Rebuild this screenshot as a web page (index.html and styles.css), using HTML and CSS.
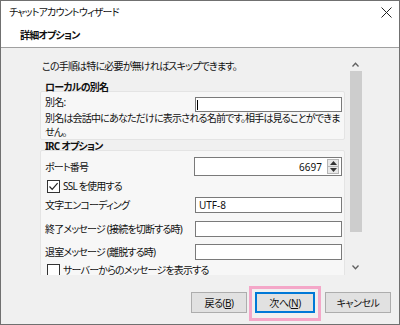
FILE: index.html
```html
<!DOCTYPE html>
<html lang="ja">
<head>
<meta charset="utf-8">
<title>チャットアカウントウィザード</title>
<link rel="stylesheet" href="styles.css">
</head>
<body>
<div class="window">
  <div class="titlebar">
    <span class="title">チャットアカウントウィザード</span>
    <svg class="close" width="11" height="11" viewBox="0 0 11 11"><path d="M0.5 0.5L10.5 10.5M10.5 0.5L0.5 10.5" stroke="#222" stroke-width="1" fill="none"/></svg>
  </div>
  <div class="header"><span class="header-title">詳細オプション</span></div>
  <div class="body">
    <div class="scroller">
      <div class="content">
        <p class="intro">この手順は特に必要が無ければスキップできます。</p>
        <div class="group-title">ローカルの別名</div>
        <div class="panel">
          <div class="row row-alias">
            <span class="label">別名:</span>
            <div class="field field-alias"><span class="caret"></span></div>
          </div>
          <p class="desc">別名は会話中にあなただけに表示される名前です。相手は見ることができま<br>せん。</p>
        </div>
        <div class="group-title group-title-irc">IRC オプション</div>
        <div class="panel panel-irc">
          <div class="row row-port">
            <span class="label">ポート番号</span>
            <div class="field field-spin">
              <span class="spin-value">6697</span>
              <span class="spin">
                <span class="spin-btn"><svg width="7" height="4" viewBox="0 0 7 4"><path d="M0 4L3.5 0L7 4Z" fill="#333"/></svg></span>
                <span class="spin-btn"><svg width="7" height="4" viewBox="0 0 7 4"><path d="M0 0L3.5 4L7 0Z" fill="#333"/></svg></span>
              </span>
            </div>
          </div>
          <div class="row-check row-ssl">
            <span class="checkbox"><svg width="11" height="11" viewBox="0 0 11 11"><path d="M1.5 5.5L4.2 8.3L9.6 2.2" stroke="#222" stroke-width="1.2" fill="none"/></svg></span>
            <span class="check-label">SSL を使用する</span>
          </div>
          <div class="row row-field row-enc">
            <span class="label">文字エンコーディング</span>
            <div class="field field-text"><span class="value">UTF-8</span></div>
          </div>
          <div class="row row-field row-quit">
            <span class="label">終了メッセージ (接続を切断する時)</span>
            <div class="field field-text"></div>
          </div>
          <div class="row row-field row-part">
            <span class="label">退室メッセージ (離脱する時)</span>
            <div class="field field-text"></div>
          </div>
          <div class="row-check row-server">
            <span class="checkbox"></span>
            <span class="check-label">サーバーからのメッセージを表示する</span>
          </div>
        </div>
      </div>
      <div class="scrollbar">
        <div class="arrow arrow-up"><svg width="7" height="5" viewBox="0 0 7 5"><path d="M0.5 4.5L3.5 1.2L6.5 4.5" stroke="#606060" stroke-width="1.3" fill="none"/></svg></div>
        <div class="thumb"></div>
        <div class="arrow arrow-down"><svg width="7" height="5" viewBox="0 0 7 5"><path d="M0.5 0.5L3.5 3.8L6.5 0.5" stroke="#606060" stroke-width="1.3" fill="none"/></svg></div>
      </div>
    </div>
    <div class="buttons">
      <button class="btn btn-back">戻る(<u>B</u>)</button>
      <button class="btn btn-next">次へ(<u>N</u>)</button>
      <button class="btn btn-cancel">キャンセル</button>
    </div>
  </div>
  <div class="highlight"></div>
</div>
</body>
</html>
```
FILE: styles.css
```css
* { box-sizing: border-box; }
html, body { margin: 0; padding: 0; }
body {
  font-family: "Noto Sans", "Noto Sans CJK JP", sans-serif;
  font-size: 10px;
  letter-spacing: -0.8px;
  font-feature-settings: "palt";
  color: #111;
  background: #fff;
}
.window {
  position: relative;
  width: 400px;
  height: 325px;
  border: 1px solid #707070;
  background: #f0f0f0;
  display: flex;
  flex-direction: column;
  overflow: hidden;
}
.titlebar {
  height: 23px;
  background: #fff;
  display: flex;
  align-items: center;
  justify-content: space-between;
  padding: 0 7px 0 8px;
  line-height: 23px;
}
.close { display: block; }
.header {
  height: 24px;
  background: #fff;
  border-bottom: 1px solid #a0a0a0;
  padding-left: 19px;
  line-height: 23px;
}
.header-title { font-weight: bold; }
.body {
  flex: 1;
  display: flex;
  flex-direction: column;
}
.scroller {
  margin: 9px 0 0 39px;
  width: 322px;
  height: 218px;
  overflow: hidden;
  display: flex;
}
.content {
  width: 309px;
  flex: none;
}
.intro {
  margin: 0 0 7px 0;
  padding: 2px 0 0 2px;
  line-height: 14px;
}
.group-title {
  padding-left: 5px;
  line-height: 14px;
  font-weight: bold;
}
.group-title-irc { margin-top: -1px; }
.panel {
  margin-top: -3px;
  width: 305px;
  border: 1px solid #e4e4e4;
  border-radius: 2px;
  background: #f7f7f7;
  padding: 0 2px 0 4px;
}
.row {
  display: grid;
  grid-template-columns: 150px 1fr;
  align-items: center;
}
.label { line-height: 14px; white-space: nowrap; }
.row-alias { margin-top: 3px; align-items: start; }
.field {
  background: #fff;
  border: 1px solid #7a7a7a;
}
.field-alias {
  height: 15px;
  margin-top: 2px;
  padding: 2px 0 0 1px;
}
.caret {
  display: block;
  width: 1px;
  height: 10px;
  background: #000;
}
.desc {
  margin: -1px 0 0 0;
  line-height: 14px;
  padding-bottom: 0;
  white-space: nowrap;
}
.row-port { margin-top: 6px; }
.field-spin {
  height: 19px;
  display: flex;
  align-items: center;
  justify-content: flex-end;
  padding-right: 2px;
  margin-left: -1px;
}
.spin-value { line-height: 14px; margin-right: 5px; letter-spacing: 0; }
.spin {
  display: flex;
  flex-direction: column;
  width: 12px;
  height: 15px;
  border: 1px solid #b5b5b5;
  background: #e8e8e8;
}
.spin-btn {
  flex: 1;
  display: flex;
  align-items: center;
  justify-content: center;
}
.spin-btn + .spin-btn { border-top: 1px solid #b5b5b5; }
.spin-btn svg { display: block; }
.row-check {
  display: flex;
  align-items: center;
  height: 14px;
  padding-left: 2px;
}
.row-ssl { margin-top: 3px; }
.row-server { margin-top: 3px; }
.checkbox {
  width: 13px;
  height: 13px;
  border: 1px solid #333;
  background: #fff;
  display: flex;
  align-items: center;
  justify-content: center;
  margin-right: 3px;
}
.checkbox svg { display: block; }
.check-label { line-height: 14px; white-space: nowrap; }
.field-text {
  height: 16px;
  padding-left: 3px;
  line-height: 14px;
}
.value { letter-spacing: 0; }
.row-enc { margin-top: 4px; }
.row-quit { margin-top: 8px; }
.row-part { margin-top: 7px; }
.scrollbar {
  width: 13px;
  flex: none;
  display: flex;
  flex-direction: column;
  align-items: center;
}
.arrow {
  height: 14px;
  display: flex;
  align-items: center;
  justify-content: center;
  width: 13px;
}
.arrow svg { display: block; }
.arrow-up { padding-top: 1px; }
.thumb {
  width: 12px;
  margin-left: 1px;
  height: 161px;
  background: #cdcdcd;
}
.arrow-down { margin-top: 28px; }
.buttons {
  margin-top: 17px;
  display: flex;
  justify-content: flex-end;
  padding-right: 8px;
}
.btn {
  height: 21px;
  padding: 0;
  font: inherit;
  letter-spacing: -0.5px;
  font-feature-settings: "palt";
  color: #111;
  background: #e1e1e1;
  border: 1px solid #adadad;
  line-height: 18px;
}
.btn u { text-underline-offset: 1px; }
.btn-back { width: 56px; }
.btn-next {
  width: 60px;
  margin-left: 8px;
  border: 2px solid #0078d7;
}
.btn-cancel {
  width: 66px;
  margin-left: 10px;
}
.highlight {
  position: absolute;
  left: 248px;
  top: 285px;
  width: 72px;
  height: 35px;
  border: 3px solid #f4a7c8;
  pointer-events: none;
}
```
